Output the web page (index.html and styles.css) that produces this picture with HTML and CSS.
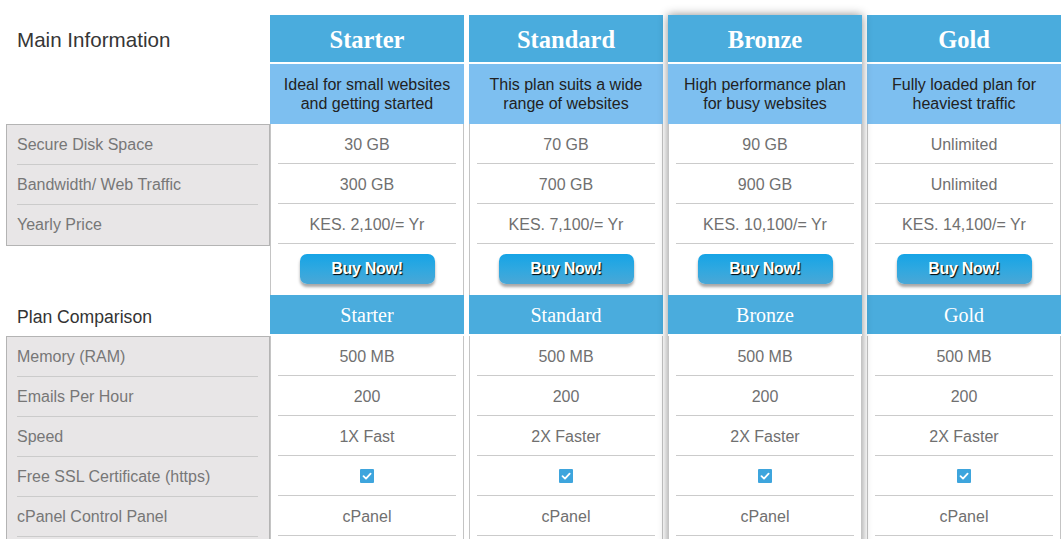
FILE: index.html
```html
<!DOCTYPE html>
<html>
<head>
<meta charset="utf-8">
<link rel="stylesheet" href="styles.css">
</head>
<body>
<div class="pricing">
  <div class="labels">
    <div class="main-title">Main Information</div>
    <div class="label-box">
      <div class="label-row">Secure Disk Space</div>
      <div class="label-row">Bandwidth/ Web Traffic</div>
      <div class="label-row">Yearly Price</div>
    </div>
    <div class="label-spacer"></div>
    <div class="sub-title">Plan Comparison</div>
    <div class="label-box">
      <div class="label-row">Memory (RAM)</div>
      <div class="label-row">Emails Per Hour</div>
      <div class="label-row">Speed</div>
      <div class="label-row">Free SSL Certificate (https)</div>
      <div class="label-row">cPanel Control Panel</div>
      <div class="label-row"></div>
    </div>
  </div>

  <div class="plans">
    <div class="plan">
      <div class="plan-head">Starter</div>
      <div class="plan-desc">Ideal for small websites<br>and getting started</div>
      <div class="plan-body">
        <div class="cell">30 GB</div>
        <div class="cell">300 GB</div>
        <div class="cell">KES. 2,100/= Yr</div>
        <div class="buy-row"><a class="buy">Buy Now!</a></div>
      </div>
      <div class="plan-sub">Starter</div>
      <div class="plan-body">
        <div class="cell">500 MB</div>
        <div class="cell">200</div>
        <div class="cell">1X Fast</div>
        <div class="cell"><span class="check"><svg viewBox="0 0 14 14" width="14" height="14"><path d="M3.5 7.2 L6 9.6 L10.6 4.6" fill="none" stroke="#fff" stroke-width="1.8" stroke-linecap="round" stroke-linejoin="round"/></svg></span></div>
        <div class="cell">cPanel</div>
        <div class="cell"></div>
      </div>
    </div>

    <div class="plan">
      <div class="plan-head">Standard</div>
      <div class="plan-desc">This plan suits a wide<br>range of websites</div>
      <div class="plan-body">
        <div class="cell">70 GB</div>
        <div class="cell">700 GB</div>
        <div class="cell">KES. 7,100/= Yr</div>
        <div class="buy-row"><a class="buy">Buy Now!</a></div>
      </div>
      <div class="plan-sub">Standard</div>
      <div class="plan-body">
        <div class="cell">500 MB</div>
        <div class="cell">200</div>
        <div class="cell">2X Faster</div>
        <div class="cell"><span class="check"><svg viewBox="0 0 14 14" width="14" height="14"><path d="M3.5 7.2 L6 9.6 L10.6 4.6" fill="none" stroke="#fff" stroke-width="1.8" stroke-linecap="round" stroke-linejoin="round"/></svg></span></div>
        <div class="cell">cPanel</div>
        <div class="cell"></div>
      </div>
    </div>

    <div class="plan featured">
      <div class="plan-head">Bronze</div>
      <div class="plan-desc">High performance plan<br>for busy websites</div>
      <div class="plan-body">
        <div class="cell">90 GB</div>
        <div class="cell">900 GB</div>
        <div class="cell">KES. 10,100/= Yr</div>
        <div class="buy-row"><a class="buy">Buy Now!</a></div>
      </div>
      <div class="plan-sub">Bronze</div>
      <div class="plan-body">
        <div class="cell">500 MB</div>
        <div class="cell">200</div>
        <div class="cell">2X Faster</div>
        <div class="cell"><span class="check"><svg viewBox="0 0 14 14" width="14" height="14"><path d="M3.5 7.2 L6 9.6 L10.6 4.6" fill="none" stroke="#fff" stroke-width="1.8" stroke-linecap="round" stroke-linejoin="round"/></svg></span></div>
        <div class="cell">cPanel</div>
        <div class="cell"></div>
      </div>
    </div>

    <div class="plan">
      <div class="plan-head">Gold</div>
      <div class="plan-desc">Fully loaded plan for<br>heaviest traffic</div>
      <div class="plan-body">
        <div class="cell">Unlimited</div>
        <div class="cell">Unlimited</div>
        <div class="cell">KES. 14,100/= Yr</div>
        <div class="buy-row"><a class="buy">Buy Now!</a></div>
      </div>
      <div class="plan-sub">Gold</div>
      <div class="plan-body">
        <div class="cell">500 MB</div>
        <div class="cell">200</div>
        <div class="cell">2X Faster</div>
        <div class="cell"><span class="check"><svg viewBox="0 0 14 14" width="14" height="14"><path d="M3.5 7.2 L6 9.6 L10.6 4.6" fill="none" stroke="#fff" stroke-width="1.8" stroke-linecap="round" stroke-linejoin="round"/></svg></span></div>
        <div class="cell">cPanel</div>
        <div class="cell"></div>
      </div>
    </div>
  </div>
</div>
</body>
</html>
```

FILE: styles.css
```css
html, body {
  margin: 0;
  padding: 0;
  background: #ffffff;
  overflow: hidden;
}

body {
  font-family: "Liberation Sans", Arial, sans-serif;
  font-size: 16px;
}

.pricing {
  display: flex;
  align-items: flex-start;
  padding: 15px 0 0 6px;
}

.labels {
  width: 264px;
  flex: none;
  display: flex;
  flex-direction: column;
}

.plans {
  display: flex;
  align-items: flex-start;
  gap: 5px;
}

.main-title {
  height: 109px;
  box-sizing: border-box;
  padding: 13px 0 0 11px;
  line-height: 24px;
  font-size: 20.6px;
  color: #363636;
}

.label-box {
  background: #e8e6e7;
  border: 1px solid #b4b4b4;
  padding: 0 11px 0 10px;
}

.label-row {
  height: 40px;
  line-height: 39px;
  box-sizing: border-box;
  border-bottom: 1px solid #cbcbcb;
  color: #777777;
  font-size: 16px;
  white-space: nowrap;
}

.label-box .label-row:last-child {
  border-bottom: none;
}

.label-spacer {
  height: 50px;
}

.sub-title {
  height: 40px;
  line-height: 42px;
  padding-left: 11px;
  font-size: 17.6px;
  color: #333333;
}

.plan {
  width: 194px;
  flex: none;
  display: flex;
  flex-direction: column;
  background: #ffffff;
  position: relative;
}

.plan.featured {
  box-shadow: 0 0 9px rgba(0, 0, 0, 0.45);
  z-index: 2;
}

.plan-head {
  height: 47px;
  line-height: 49px;
  background: #4aacdd;
  color: #ffffff;
  text-align: center;
  font-family: "Liberation Serif", "Times New Roman", serif;
  font-weight: bold;
  font-size: 24.5px;
  margin-bottom: 2px;
}

.plan-desc {
  height: 60px;
  box-sizing: border-box;
  padding-top: 11px;
  background: #7dbff0;
  color: #222222;
  text-align: center;
  font-size: 16px;
  line-height: 19px;
}

.plan-body {
  border-left: 1px solid #c4c4c4;
  border-right: 1px solid #c4c4c4;
  padding: 0 7px;
}

.cell {
  height: 40px;
  box-sizing: border-box;
  padding-top: 3px;
  border-bottom: 1px solid #cbcbcb;
  text-align: center;
  color: #707070;
  font-size: 16px;
  display: flex;
  align-items: center;
  justify-content: center;
}

.buy-row {
  height: 51px;
  box-sizing: border-box;
  padding-top: 10px;
  display: flex;
  justify-content: center;
  align-items: flex-start;
}

.buy {
  width: 135px;
  height: 30px;
  line-height: 30px;
  border-radius: 7px;
  background: linear-gradient(to bottom, #16a4e6 0%, #2fa8e0 50%, #4aa7d6 100%);
  box-shadow: 0 3px 3px rgba(0, 0, 0, 0.35);
  color: #ffffff;
  font-weight: bold;
  font-size: 16px;
  text-align: center;
  text-shadow: 1px 1px 1px #000000;
  letter-spacing: -0.3px;
}

.plan-sub {
  height: 39px;
  line-height: 41px;
  background: #4aacdd;
  color: #ffffff;
  text-align: center;
  font-family: "Liberation Serif", "Times New Roman", serif;
  font-size: 20px;
  margin-bottom: 2px;
}

.check {
  width: 14px;
  height: 14px;
  background: #3ea5dd;
  border-radius: 1px;
  display: block;
  margin-top: -3px;
}

.check svg {
  display: block;
}
```
